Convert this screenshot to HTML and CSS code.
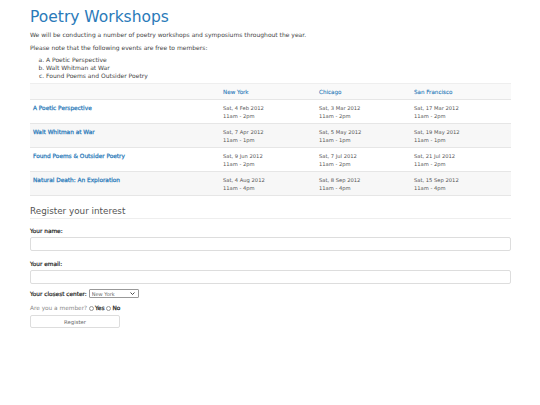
FILE: index.html
```html
<!DOCTYPE html>
<html>
<head>
<meta charset="utf-8">
<link rel="stylesheet" href="styles.css">
</head>
<body>
<div class="page">
  <h1 class="title">Poetry Workshops</h1>
  <p class="text">We will be conducting a number of poetry workshops and symposiums throughout the year.</p>
  <p class="text">Please note that the following events are free to members:</p>
  <ol class="list">
    <li>A Poetic Perspective</li>
    <li>Walt Whitman at War</li>
    <li>Found Poems and Outsider Poetry</li>
  </ol>
  <table class="events">
    <colgroup><col class="c1"><col class="c2"><col class="c3"><col class="c4"></colgroup>
    <thead>
      <tr><th></th><th>New York</th><th>Chicago</th><th>San Francisco</th></tr>
    </thead>
    <tbody>
      <tr><th>A Poetic Perspective</th><td>Sat, 4 Feb 2012<br>11am - 2pm</td><td>Sat, 3 Mar 2012<br>11am - 2pm</td><td>Sat, 17 Mar 2012<br>11am - 2pm</td></tr>
      <tr><th>Walt Whitman at War</th><td>Sat, 7 Apr 2012<br>11am - 1pm</td><td>Sat, 5 May 2012<br>11am - 1pm</td><td>Sat, 19 May 2012<br>11am - 1pm</td></tr>
      <tr><th>Found Poems &amp; Outsider Poetry</th><td>Sat, 9 Jun 2012<br>11am - 2pm</td><td>Sat, 7 Jul 2012<br>11am - 2pm</td><td>Sat, 21 Jul 2012<br>11am - 2pm</td></tr>
      <tr><th>Natural Death: An Exploration</th><td>Sat, 4 Aug 2012<br>11am - 4pm</td><td>Sat, 8 Sep 2012<br>11am - 4pm</td><td>Sat, 15 Sep 2012<br>11am - 4pm</td></tr>
    </tbody>
  </table>
  <form class="form">
    <h2 class="subtitle">Register your interest</h2>
    <label class="label">Your name:</label>
    <input class="field" type="text">
    <label class="label label-email">Your email:</label>
    <input class="field" type="text">
    <div class="row center"><span class="label-inline">Your closest center:</span>
      <span class="select-wrap">
        <select class="select"><option>New York</option><option>Chicago</option><option>San Francisco</option></select>
        <svg class="chev" width="5" height="3" viewBox="0 0 5 3"><path d="M0.5 0.5 L2.5 2.5 L4.5 0.5" fill="none" stroke="#333" stroke-width="0.9"/></svg>
      </span>
    </div>
    <div class="row member"><span>Are you a member?</span>
      <span class="radio"></span><b>Yes</b>
      <span class="radio"></span><b>No</b>
    </div>
    <button class="btn" type="button">Register</button>
  </form>
</div>
</body>
</html>
```
FILE: styles.css
```css
html, body { margin: 0; padding: 0; background: #fff; }
body { font-family: "DejaVu Sans", "Open Sans", sans-serif; color: #333; }
.page { width: 481px; padding: 7px 0 0 30px; }
.title { font-size: 15.5px; font-weight: normal; color: #2a7ab9; margin: 0; line-height: 20px; }
.text { font-size: 6px; margin: 0; line-height: 13px; color: #444; }
.text:first-of-type { margin-top: 1px; }
.list { font-size: 6px; line-height: 8px; margin: 2px 0 3px; padding-left: 16px; list-style: lower-alpha; color: #444; }
.events { width: 481px; table-layout: fixed; border-collapse: collapse; border-top: 1px solid #eee; }
.c1 { width: 190px; }
.c2 { width: 96px; }
.c3 { width: 95px; }
.c4 { width: 100px; }
.events th, .events td { text-align: left; vertical-align: top; padding: 4px 3px 3px; border-bottom: 1px solid #e6e6e6; line-height: 8px; white-space: nowrap; }
.events thead th { color: #2a7ab9; font-weight: normal; font-size: 5.6px; -webkit-text-stroke: 0.1px #2a7ab9; }
.events thead tr { background: #f9f9f9; }
.events tbody th { color: #2a7ab9; font-weight: normal; font-size: 5.8px; -webkit-text-stroke: 0.25px #2a7ab9; }
.events tbody td { color: #555; font-size: 5.2px; }
.events tbody tr:nth-child(even) { background: #f7f7f7; }
.form { margin-top: 9px; }
.subtitle { font-size: 8.8px; font-weight: normal; color: #555; margin: 0 0 8px; padding-bottom: 1px; line-height: 12px; border-bottom: 1px solid #eee; }
.label { display: block; font-size: 5.8px; line-height: 8px; font-weight: normal; color: #222; -webkit-text-stroke: 0.2px #222; margin: 0 0 2px; }
.label-email { margin-top: 9px; }
.field { display: block; box-sizing: border-box; width: 481px; height: 14px; border: 1px solid #ddd; border-radius: 2px; margin: 0; padding: 0; background: #fff; }
.row { font-size: 5.8px; line-height: 8px; display: flex; align-items: center; }
.center { margin-top: 5px; height: 9px; }
.label-inline { color: #222; -webkit-text-stroke: 0.2px #222; margin-right: 2px; }
.select-wrap { position: relative; display: inline-block; height: 9px; }
.select { -webkit-appearance: none; appearance: none; display: block; box-sizing: border-box; font-size: 5px; height: 9px; width: 50px; padding: 0 0 0 2px; margin: 0; font-family: inherit; color: #666; background: #fff; border: 1px solid #999; border-radius: 1px; }
.chev { position: absolute; right: 4px; top: 3px; }
.member { color: #888; margin-top: 6px; margin-bottom: 3px; }
.member b { color: #222; font-weight: normal; -webkit-text-stroke: 0.25px #222; }
.radio { display: inline-block; box-sizing: border-box; width: 5px; height: 5px; border: 0.7px solid #999; border-radius: 50%; margin: 0 1px 0 2px; }
.btn { display: block; width: 90px; height: 13px; font-size: 5.3px; background: #fff; border: 1px solid #ddd; border-radius: 2px; color: #666; font-family: inherit; padding: 0; }
```
